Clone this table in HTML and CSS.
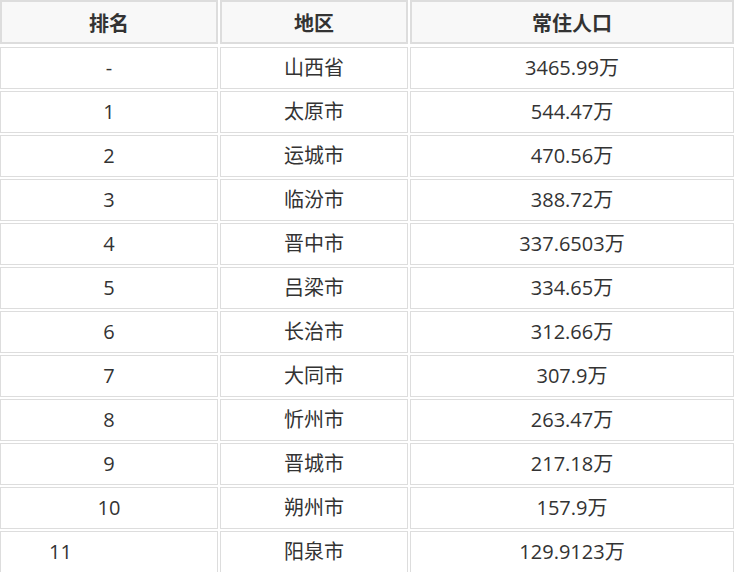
FILE: index.html
```html
<!DOCTYPE html>
<html lang="zh">
<head>
<meta charset="utf-8">
<title>山西省常住人口</title>
<link rel="stylesheet" href="styles.css">
</head>
<body>
<table class="pop">
  <thead>
    <tr>
      <th class="c1">排名</th>
      <th class="c2">地区</th>
      <th class="c3">常住人口</th>
    </tr>
  </thead>
  <tbody>
    <tr><td>-</td><td>山西省</td><td>3465.99万</td></tr>
    <tr><td>1</td><td>太原市</td><td>544.47万</td></tr>
    <tr><td>2</td><td>运城市</td><td>470.56万</td></tr>
    <tr><td>3</td><td>临汾市</td><td>388.72万</td></tr>
    <tr><td>4</td><td>晋中市</td><td>337.6503万</td></tr>
    <tr><td>5</td><td>吕梁市</td><td>334.65万</td></tr>
    <tr><td>6</td><td>长治市</td><td>312.66万</td></tr>
    <tr><td>7</td><td>大同市</td><td>307.9万</td></tr>
    <tr><td>8</td><td>忻州市</td><td>263.47万</td></tr>
    <tr><td>9</td><td>晋城市</td><td>217.18万</td></tr>
    <tr><td>10</td><td>朔州市</td><td>157.9万</td></tr>
    <tr><td class="left">11</td><td>阳泉市</td><td>129.9123万</td></tr>
  </tbody>
</table>
</body>
</html>
```

FILE: styles.css
```css
html, body {
  margin: 0;
  padding: 0;
  overflow: hidden;
  background: #fff;
}

.pop {
  margin: -2px 0 0 -2px;
  width: 738px;
  table-layout: fixed;
  border-collapse: separate;
  border-spacing: 2px;
  font-family: "Open Sans", "Noto Sans CJK SC", sans-serif;
  font-size: 20px;
  color: #333;
}

.pop th,
.pop td {
  box-sizing: border-box;
  text-align: center;
  vertical-align: middle;
  padding: 0;
}

.pop th {
  height: 45px;
  border: 0;
  border-bottom: 1px solid #fff;
  background: #f8f8f8;
  background-clip: padding-box;
  box-shadow: inset 0 0 0 2px #dddddd;
  font-weight: bold;
}

.pop .c1 { width: 218px; }
.pop .c2 { width: 188px; }
.pop .c3 { width: 324px; }

.pop td {
  height: 42px;
  border: 1px solid #dddddd;
  line-height: 24px;
}

.pop td.left {
  text-align: left;
  padding-left: 48px;
}
```
